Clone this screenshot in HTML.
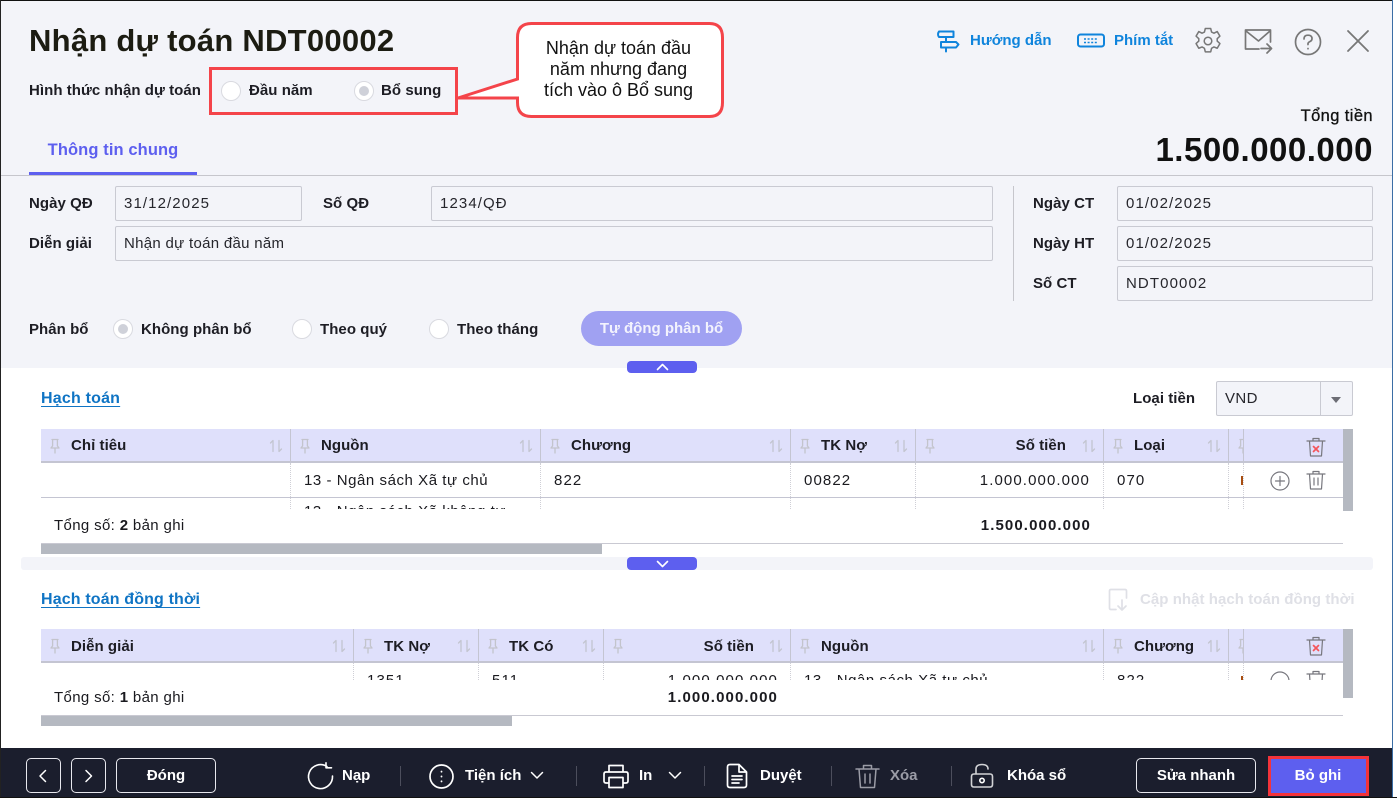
<!DOCTYPE html>
<html lang="vi"><head><meta charset="utf-8"><title>Nhận dự toán</title>
<style>
html,body{margin:0;padding:0;background:#fff}
#w{position:relative;width:1397px;height:798px;overflow:hidden;background:#fff;font-family:"Liberation Sans",sans-serif;color:#1a1a1f}
#w div,#w span,#w svg{position:absolute}
.t{white-space:nowrap;line-height:20px;font-size:15px;letter-spacing:.5px;margin-top:1px}
.b{font-weight:700;letter-spacing:.05px;color:#1d1d24}
.r{text-align:right}
.c{text-align:center}
.in{box-sizing:border-box;border:1px solid #c9cad2;border-radius:2px;background:#f3f4f9;height:35px;line-height:34px;padding-left:8px;font-size:15px;letter-spacing:.3px;color:#26262c;white-space:nowrap}
#w .n{letter-spacing:1.1px}
.ra{width:18px;height:18px;border:1px solid #d9dae0;border-radius:50%;background:#fff;box-sizing:content-box}
.ra.on::after{content:"";position:absolute;left:4px;top:4px;width:10px;height:10px;border-radius:50%;background:#cfd1d9}
.hd{background:#dfe0fb;height:34px;box-sizing:border-box;border-bottom:2px solid #c4c5d2}
.vl{width:1px;background:#c4c5d2;top:0;height:34px}
.dl{width:0;border-left:1px dotted #cfcfd6}
.hl{height:1px;background:#c9c9d2}
.gr{background:#b5b9c1}
.pill{background:#5d5fef;width:70px;border-radius:4px}
.ft{color:#fff;font-weight:700;letter-spacing:0}
.btn{box-sizing:border-box;border:1px solid #e8e8ee;border-radius:5px;height:35px;top:758px}
.sep{width:1px;height:20px;background:#4c4e5c;top:766px}
svg{overflow:visible}
.s{fill:none;stroke-linecap:round;stroke-linejoin:round}
</style></head><body>
<div id="w">
<svg width="0" height="0" style="left:0;top:0">
<defs>
<symbol id="pin" viewBox="0 0 12 16"><path class="s" stroke="#c3c4cc" stroke-width="1.3" d="M3 1.5h6M3.6 1.500v6.400L2 10h8L8.400 7.900V1.500M6 10v5"/></symbol>
<symbol id="sort" viewBox="0 0 14 14"><path class="s" stroke="#c3c5d0" stroke-width="1.3" d="M4 12.500V1.500L1.500 4M10 1.500v11L12.500 10"/></symbol>
<symbol id="tr" viewBox="0 0 20 20"><path class="s" stroke="#77777e" stroke-width="1.2" d="M1 4h18M7 4V1.500h6V4M3.500 4l1 15h11l1-15"/></symbol>
</defs></svg>

<!-- header -->
<div style="left:0;top:0;width:1392px;height:368px;background:#f3f4f9"></div>
<div style="left:0;top:0;width:1397px;height:1px;background:#111"></div>
<div style="left:0;top:0;width:1px;height:798px;background:#222"></div>
<div style="left:1392px;top:0;width:1px;height:798px;background:#3b6ea5"></div>
<div style="left:1393px;top:0;width:4px;height:798px;background:#fff"></div>

<div class="t" style="left:29px;top:20px;line-height:40px;font-size:31px;font-weight:700;letter-spacing:.25px;color:#1c1c12">Nhận dự toán NDT00002</div>
<div class="t b" style="left:29px;top:80px;">Hình thức nhận dự toán</div>

<div style="left:209px;top:67px;width:249px;height:48px;box-sizing:border-box;border:3px solid #f4444a"></div>
<div class="ra" style="left:221px;top:81px"></div>
<div class="t b" style="left:249px;top:80px">Đầu năm</div>
<div class="ra on" style="left:354px;top:81px"></div>
<div class="t b" style="left:381px;top:80px">Bổ sung</div>

<svg style="left:450px;top:15px" width="285" height="110"><path d="M67.500 22.500Q67.500 8.500 81.500 8.500H259.500Q272.500 8.500 272.500 22.500V87.500Q272.500 101.500 259.500 101.500H81.500Q67.500 101.500 67.500 87.500V83L8 83L67.500 64Z" fill="#fff" stroke="#f4444a" stroke-width="3"/></svg>
<div class="t c" style="left:521px;top:37px;width:195px;font-size:18px;line-height:21px;letter-spacing:0;color:#111;white-space:normal;">Nhận dự toán đầu<br>năm nhưng đang<br>tích vào ô Bổ sung</div>

<!-- top right -->
<svg style="left:936px;top:30px" width="24" height="24" viewBox="0 0 24 24"><path class="s" stroke="#0f84dc" stroke-width="2" d="M3 1.500H17.500V7H3Q1 4.300 3 1.500ZM5 12H20L22.500 14.500L20 17.500H5ZM10 7v5M10 17.500v4"/></svg>
<div class="t" style="left:970px;top:30px;color:#0f84dc;font-weight:700;letter-spacing:0">Hướng dẫn</div>
<svg style="left:1077px;top:33px" width="28" height="16" viewBox="0 0 28 16"><rect x="1" y="1.500" width="26" height="12" rx="2.500" fill="none" stroke="#0f84dc" stroke-width="2"/><path stroke="#0f84dc" stroke-width="1.600" stroke-dasharray="2 1.600" d="M7 6h14M7 9.500h14"/></svg>
<div class="t" style="left:1114px;top:30px;color:#0f84dc;font-weight:700;letter-spacing:0">Phím tắt</div>
<svg style="left:1195px;top:28px" width="26" height="26" viewBox="1 1 24 24"><path class="s" stroke="#777" stroke-width="1.400" d="M10.500 1.500h5l.8 3.300 2.200 1 3-1.500 2.500 4.200-2.500 2.400v2.200l2.500 2.300-2.500 4.300-3-1.200-2.200 1.200-.8 3.300h-5l-.8-3.300-2.200-1.200-3 1.200-2.500-4.300 2.500-2.300v-2.200L2 8.500l2.500-4.200 3 1.500 2.200-1z"/><circle class="s" stroke="#777" stroke-width="1.400" cx="13" cy="13" r="3.500"/></svg>
<svg style="left:1244px;top:28px" width="30" height="28" viewBox="0 0 30 28"><path class="s" stroke="#777" stroke-width="1.700" d="M15 21H1.500V2h25v12M2 3l12.500 10L26 3M17 20.500h10M23 16l4.500 4.500L23 25"/></svg>
<svg style="left:1294px;top:28px" width="28" height="28" viewBox="0 0 28 28"><circle class="s" stroke="#777" stroke-width="1.700" cx="14" cy="14" r="12.500"/><path class="s" stroke="#777" stroke-width="1.700" d="M10 11q0-3.800 4-3.800t4 3.400q0 2-2.200 3t-1.800 3M14 20.500v.3"/></svg>
<svg style="left:1346px;top:29px" width="24" height="24" viewBox="0 0 24 24"><path class="s" stroke="#777" stroke-width="1.800" d="M2 2l20 20M22 2L2 22"/></svg>

<div class="t b r" style="left:1173px;top:105px;width:200px;font-size:16.500px;font-weight:400;letter-spacing:.4px;color:#111;-webkit-text-stroke:.3px #111">Tổng tiền</div>
<div class="t r" style="left:1073px;top:129px;width:300px;line-height:40px;font-size:33px;font-weight:700;letter-spacing:.5px;color:#111">1.500.000.000</div>

<div class="t" style="left:29px;top:139px;width:168px;text-align:center;color:#5d5fef;font-weight:700;font-size:16.500px;letter-spacing:.1px">Thông tin chung</div>
<div style="left:29px;top:172px;width:168px;height:3px;background:#5d5fef"></div>
<div class="hl" style="left:1px;top:175px;width:1391px;background:#c6c6cc"></div>

<!-- form -->
<div class="t b" style="left:29px;top:193px">Ngày QĐ</div>
<div class="in n" style="left:115px;top:186px;width:187px">31/12/2025</div>
<div class="t b" style="left:323px;top:193px">Số QĐ</div>
<div class="in n" style="left:431px;top:186px;width:562px;">1234/QĐ</div>
<div class="t b" style="left:29px;top:233px">Diễn giải</div>
<div class="in" style="left:115px;top:226px;width:878px;">Nhận dự toán đầu năm</div>
<div style="left:1013px;top:186px;width:1px;height:115px;background:#c6c6cc"></div>
<div class="t b" style="left:1033px;top:193px">Ngày CT</div>
<div class="in n" style="left:1117px;top:186px;width:256px">01/02/2025</div>
<div class="t b" style="left:1033px;top:233px">Ngày HT</div>
<div class="in n" style="left:1117px;top:226px;width:256px">01/02/2025</div>
<div class="t b" style="left:1033px;top:273px">Số CT</div>
<div class="in n" style="left:1117px;top:266px;width:256px">NDT00002</div>

<div class="t b" style="left:29px;top:319px">Phân bổ</div>
<div class="ra on" style="left:113px;top:319px"></div>
<div class="t b" style="left:141px;top:319px">Không phân bổ</div>
<div class="ra" style="left:292px;top:319px"></div>
<div class="t b" style="left:320px;top:319px">Theo quý</div>
<div class="ra" style="left:429px;top:319px"></div>
<div class="t b" style="left:457px;top:319px">Theo tháng</div>
<div class="t c" style="left:581px;top:310px;width:161px;height:35px;line-height:36px;border-radius:18px;background:#a0a1f2;color:#f3f3fd;font-weight:700;letter-spacing:0">Tự động phân bổ</div>

<div class="pill" style="left:627px;top:361px;height:12px"></div>
<svg style="left:656px;top:363px" width="13" height="8"><path class="s" stroke="#fff" stroke-width="1.600" d="M1.500 6.500L6.500 1.500L11.500 6.500"/></svg>

<!-- table 1 -->
<div class="t" style="left:41px;top:388px;font-weight:700;color:#0f74c4;font-size:16px;letter-spacing:.2px;text-decoration:underline;text-underline-offset:3px">Hạch toán</div>
<div class="t b" style="left:1133px;top:388px">Loại tiền</div>
<div class="in" style="left:1216px;top:381px;width:137px;height:35px;letter-spacing:.4px">VND</div>
<div style="left:1320px;top:382px;width:1px;height:33px;background:#c9cad2"></div>
<div style="left:1331px;top:397px;width:0;height:0;border:5px solid transparent;border-top:6px solid #6c6d75;border-bottom:0"></div>

<div class="hd" style="left:41px;top:429px;width:1302px"></div>
<div class="vl" style="left:290px;top:429px"></div><div class="vl" style="left:540px;top:429px"></div><div class="vl" style="left:790px;top:429px"></div><div class="vl" style="left:915px;top:429px"></div><div class="vl" style="left:1103px;top:429px"></div><div class="vl" style="left:1228px;top:429px"></div><div class="vl" style="left:1243px;top:429px"></div>
<svg style="left:49px;top:438px" width="12" height="16"><use href="#pin"/></svg>
<svg style="left:299px;top:438px" width="12" height="16"><use href="#pin"/></svg>
<svg style="left:549px;top:438px" width="12" height="16"><use href="#pin"/></svg>
<svg style="left:799px;top:438px" width="12" height="16"><use href="#pin"/></svg>
<svg style="left:924px;top:438px" width="12" height="16"><use href="#pin"/></svg>
<svg style="left:1112px;top:438px" width="12" height="16"><use href="#pin"/></svg>
<svg style="left:1237px;top:438px;clip-path:inset(0 6px 0 0)" width="12" height="16"><use href="#pin"/></svg>
<svg style="left:269px;top:439px" width="14" height="14"><use href="#sort"/></svg>
<svg style="left:519px;top:439px" width="14" height="14"><use href="#sort"/></svg>
<svg style="left:769px;top:439px" width="14" height="14"><use href="#sort"/></svg>
<svg style="left:894px;top:439px" width="14" height="14"><use href="#sort"/></svg>
<svg style="left:1082px;top:439px" width="14" height="14"><use href="#sort"/></svg>
<svg style="left:1207px;top:439px" width="14" height="14"><use href="#sort"/></svg>
<div class="t b" style="left:71px;top:435px">Chỉ tiêu</div>
<div class="t b" style="left:321px;top:435px">Nguồn</div>
<div class="t b" style="left:571px;top:435px">Chương</div>
<div class="t b" style="left:821px;top:435px">TK Nợ</div>
<div class="t b r" style="left:966px;top:435px;width:100px">Số tiền</div>
<div class="t b" style="left:1134px;top:435px">Loại</div>
<svg style="left:1306px;top:437px" width="20" height="20"><use href="#tr"/><path class="s" stroke="#f4555a" stroke-width="1.700" d="M7.500 9.500l5 5M12.500 9.500l-5 5"/></svg>

<div style="left:41px;top:463px;width:1302px;height:46px;overflow:hidden">
<div class="dl" style="left:249px;top:0;height:46px"></div><div class="dl" style="left:499px;top:0;height:46px"></div><div class="dl" style="left:749px;top:0;height:46px"></div><div class="dl" style="left:874px;top:0;height:46px"></div><div class="dl" style="left:1062px;top:0;height:46px"></div><div class="dl" style="left:1187px;top:0;height:46px"></div><div class="dl" style="left:1202px;top:0;height:46px"></div>
<div class="hl" style="left:0;top:34px;width:1302px;height:1px;background:#c4c5d2"></div>
<div class="t" style="left:263px;top:7px;letter-spacing:.55px">13 - Ngân sách Xã tự chủ</div>
<div class="t" style="left:263px;top:38px;letter-spacing:.55px">13 - Ngân sách Xã không tự</div>
<div class="t n" style="left:513px;top:7px">822</div>
<div class="t n" style="left:763px;top:7px">00822</div>
<div class="t r n" style="left:889px;top:7px;width:160px">1.000.000.000</div>
<div class="t n" style="left:1076px;top:7px">070</div>
<div style="left:1200px;top:13px;width:2px;height:9px;background:#a84d10"></div>
<svg style="left:1229px;top:8px" width="20" height="20"><circle class="s" stroke="#77777e" stroke-width="1.200" cx="10" cy="10" r="9"/><path class="s" stroke="#77777e" stroke-width="1.200" d="M10 5.500v9M5.500 10h9"/></svg>
<svg style="left:1265px;top:7px" width="20" height="20"><use href="#tr"/><path class="s" stroke="#77777e" stroke-width="1.200" d="M8 8v7M12 8v7"/></svg>
</div>
<div class="gr" style="left:1343px;top:429px;width:10px;height:82px"></div>
<div style="left:41px;top:509px;width:1302px;height:34px;background:#fff"></div>
<div class="t" style="left:54px;top:515px;letter-spacing:.35px">Tổng số: <b>2</b> bản ghi</div>
<div class="t r n" style="left:891px;top:515px;width:200px;font-weight:700">1.500.000.000</div>
<div class="hl" style="left:41px;top:543px;width:1302px;"></div>
<div class="gr" style="left:41px;top:544px;width:561px;height:10px"></div>

<div style="left:21px;top:557px;width:1352px;height:13px;background:#f3f4f9;border-radius:3px"></div>
<div class="pill" style="left:627px;top:557px;height:13px"></div>
<svg style="left:656px;top:560px" width="13" height="8"><path class="s" stroke="#fff" stroke-width="1.600" d="M1.500 1.500L6.500 6.500L11.500 1.500"/></svg>

<!-- table 2 -->
<div class="t" style="left:41px;top:589px;font-weight:700;color:#0f74c4;font-size:16px;letter-spacing:.15px;text-decoration:underline;text-underline-offset:3px">Hạch toán đồng thời</div>
<svg style="left:1108px;top:588px" width="22" height="24" viewBox="0 0 22 24"><path class="s" stroke="#dfe0e6" stroke-width="1.700" d="M8 21.500H3Q1.500 21.500 1.500 20V3Q1.500 1.500 3 1.500h14Q18.500 1.500 18.500 3v7M14 12v10M10 18l4 4 4-4"/></svg>
<div class="t" style="left:1140px;top:589px;color:#dfe0e6;font-weight:700;letter-spacing:.05px">Cập nhật hạch toán đồng thời</div>

<div class="hd" style="left:41px;top:629px;width:1302px"></div>
<div class="vl" style="left:353px;top:629px"></div><div class="vl" style="left:478px;top:629px"></div><div class="vl" style="left:603px;top:629px"></div><div class="vl" style="left:790px;top:629px"></div><div class="vl" style="left:1103px;top:629px"></div><div class="vl" style="left:1228px;top:629px"></div><div class="vl" style="left:1243px;top:629px"></div>
<svg style="left:49px;top:638px" width="12" height="16"><use href="#pin"/></svg>
<svg style="left:362px;top:638px" width="12" height="16"><use href="#pin"/></svg>
<svg style="left:487px;top:638px" width="12" height="16"><use href="#pin"/></svg>
<svg style="left:612px;top:638px" width="12" height="16"><use href="#pin"/></svg>
<svg style="left:799px;top:638px" width="12" height="16"><use href="#pin"/></svg>
<svg style="left:1112px;top:638px" width="12" height="16"><use href="#pin"/></svg>
<svg style="left:1237px;top:638px;clip-path:inset(0 6px 0 0)" width="12" height="16"><use href="#pin"/></svg>
<svg style="left:332px;top:639px" width="14" height="14"><use href="#sort"/></svg>
<svg style="left:457px;top:639px" width="14" height="14"><use href="#sort"/></svg>
<svg style="left:582px;top:639px" width="14" height="14"><use href="#sort"/></svg>
<svg style="left:769px;top:639px" width="14" height="14"><use href="#sort"/></svg>
<svg style="left:1082px;top:639px" width="14" height="14"><use href="#sort"/></svg>
<svg style="left:1207px;top:639px" width="14" height="14"><use href="#sort"/></svg>
<div class="t b" style="left:71px;top:636px">Diễn giải</div>
<div class="t b" style="left:384px;top:636px">TK Nợ</div>
<div class="t b" style="left:509px;top:636px">TK Có</div>
<div class="t b r" style="left:654px;top:636px;width:100px">Số tiền</div>
<div class="t b" style="left:821px;top:636px">Nguồn</div>
<div class="t b" style="left:1134px;top:636px">Chương</div>
<svg style="left:1306px;top:636px" width="20" height="20"><use href="#tr"/><path class="s" stroke="#f4555a" stroke-width="1.700" d="M7.500 9.500l5 5M12.500 9.500l-5 5"/></svg>

<div style="left:41px;top:663px;width:1302px;height:17px;overflow:hidden">
<div class="dl" style="left:312px;top:0;height:17px"></div><div class="dl" style="left:437px;top:0;height:17px"></div><div class="dl" style="left:562px;top:0;height:17px"></div><div class="dl" style="left:749px;top:0;height:17px"></div><div class="dl" style="left:1062px;top:0;height:17px"></div><div class="dl" style="left:1187px;top:0;height:17px"></div><div class="dl" style="left:1202px;top:0;height:17px"></div>
<div class="t n" style="left:326px;top:7px">1351</div>
<div class="t n" style="left:451px;top:7px">511</div>
<div class="t r n" style="left:577px;top:7px;width:160px">1.000.000.000</div>
<div class="t" style="left:763px;top:7px;letter-spacing:.55px">13 - Ngân sách Xã tự chủ</div>
<div class="t n" style="left:1076px;top:7px">822</div>
<div style="left:1200px;top:13px;width:2px;height:9px;background:#a84d10"></div>
<svg style="left:1229px;top:8px" width="20" height="20"><circle class="s" stroke="#77777e" stroke-width="1.200" cx="10" cy="10" r="9"/></svg>
<svg style="left:1265px;top:7px" width="20" height="20"><use href="#tr"/></svg>
</div>
<div class="gr" style="left:1343px;top:629px;width:10px;height:69px"></div>
<div class="t" style="left:54px;top:687px;letter-spacing:.35px">Tổng số: <b>1</b> bản ghi</div>
<div class="t r n" style="left:578px;top:687px;width:200px;font-weight:700">1.000.000.000</div>
<div class="hl" style="left:41px;top:715px;width:1302px"></div>
<div class="gr" style="left:41px;top:716px;width:471px;height:10px"></div>

<!-- footer -->
<div style="left:1px;top:748px;width:1391px;height:49px;background:#1b1e2d"></div>
<div style="left:0;top:797px;width:1397px;height:1px;background:#111"></div>
<div class="btn" style="left:26px;width:35px"></div>
<svg style="left:38px;top:769px" width="10" height="14"><path class="s" stroke="#fff" stroke-width="1.500" d="M7.500 1.500L2 7l5.500 5.500"/></svg>
<div class="btn" style="left:71px;width:35px"></div>
<svg style="left:84px;top:769px" width="10" height="14"><path class="s" stroke="#fff" stroke-width="1.500" d="M2 1.500L7.500 7 2 12.500"/></svg>
<div class="btn" style="left:116px;width:100px"></div>
<div class="t ft c" style="left:116px;top:765px;width:100px">Đóng</div>

<svg style="left:307px;top:762px" width="27" height="28" viewBox="0 0 27 28"><path class="s" stroke="#fff" stroke-width="1.600" d="M20 4.500A12 12 0 1 0 25.500 14M19 .8v5h5.500"/></svg>
<div class="t ft" style="left:342px;top:765px">Nạp</div>
<div class="sep" style="left:400px"></div>
<svg style="left:429px;top:764px" width="25" height="25" viewBox="0 0 25 25"><circle class="s" stroke="#fff" stroke-width="1.700" cx="12.500" cy="12.500" r="11.500"/><path class="s" stroke="#fff" stroke-width="1.800" d="M12.500 7.500v.2M12.500 12.400v.2M12.500 17.300v.2"/></svg>
<div class="t ft" style="left:465px;top:765px">Tiện ích</div>
<svg style="left:530px;top:771px" width="14" height="9"><path class="s" stroke="#fff" stroke-width="1.500" d="M1.500 1.500L7 7l5.500-5.500"/></svg>
<div class="sep" style="left:576px"></div>
<svg style="left:603px;top:764px" width="26" height="25" viewBox="0 0 26 25"><path class="s" stroke="#fff" stroke-width="1.700" d="M6 8V1.500h14V8M6 19H3Q1 19 1 17v-7q0-2 2-2h20q2 0 2 2v7q0 2-2 2h-3M6 13.500h14v10H6z"/></svg>
<div class="t ft" style="left:639px;top:765px">In</div>
<svg style="left:668px;top:771px" width="14" height="9"><path class="s" stroke="#fff" stroke-width="1.500" d="M1.500 1.500L7 7l5.500-5.500"/></svg>
<div class="sep" style="left:704px"></div>
<svg style="left:726px;top:763px" width="22" height="26" viewBox="0 0 22 26"><path class="s" stroke="#fff" stroke-width="1.700" d="M13 1.500H4Q1.500 1.500 1.500 4v18Q1.500 24.500 4 24.500h14q2.500 0 2.500-2.500V9zM13 1.500V9h7.500M6 13h10M6 16.500h10M6 20h7"/></svg>
<div class="t ft" style="left:760px;top:765px">Duyệt</div>
<div class="sep" style="left:831px"></div>
<svg style="left:855px;top:764px" width="25" height="25" viewBox="0 0 25 25"><path class="s" stroke="#9b9ca6" stroke-width="1.500" d="M1 5h23M8.500 5V1.500h8V5M4 5l1.500 18.500h14L21 5M10 10v9M15 10v9"/></svg>
<div class="t ft" style="left:890px;top:765px;color:#9b9ca6">Xóa</div>
<div class="sep" style="left:951px"></div>
<svg style="left:970px;top:763px" width="24" height="26" viewBox="0 0 24 26"><path class="s" stroke="#fff" stroke-width="1.600" stroke-opacity=".8" d="M6 11V6q0-4.500 6-4.500T18 6M4 11h16q2.500 0 2.500 2.500v8q0 2.500-2.500 2.500H4q-2.500 0-2.500-2.500v-8Q1.500 11 4 11z"/><circle class="s" stroke="#fff" stroke-width="1.600" cx="12" cy="17.500" r="2.200"/></svg>
<div class="t ft" style="left:1007px;top:765px">Khóa sổ</div>
<div class="btn" style="left:1136px;width:120px"></div>
<div class="t ft c" style="left:1136px;top:765px;width:120px">Sửa nhanh</div>
<div style="left:1268px;top:756px;width:101px;height:40px;box-sizing:border-box;border:3px solid #f4333a;background:#5d5fef"></div>
<div class="t ft c" style="left:1268px;top:765px;width:100px">Bỏ ghi</div>
</div>
</body></html>
